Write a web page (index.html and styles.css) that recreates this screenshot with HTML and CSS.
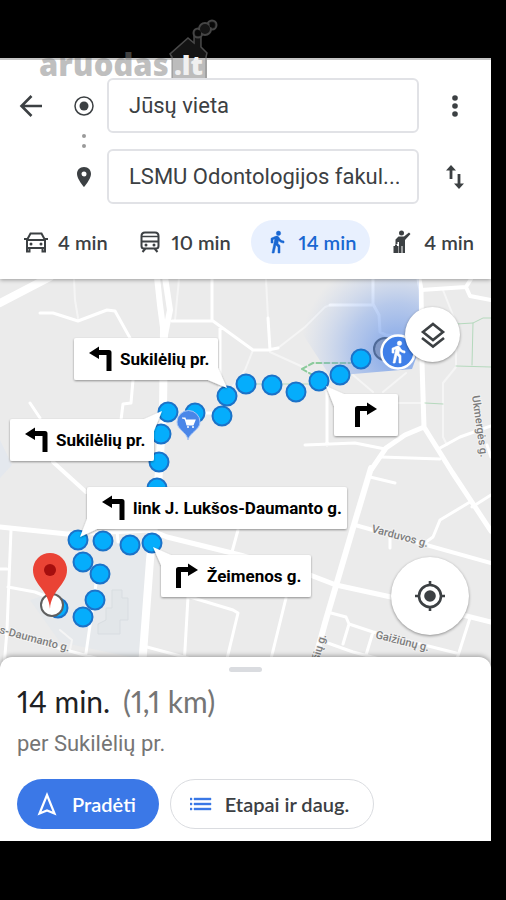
FILE: index.html
```html
<!DOCTYPE html>
<html lang="lt">
<head>
<meta charset="utf-8">
<meta name="viewport" content="width=device-width, initial-scale=1">
<title>Maršrutas</title>
<link rel="stylesheet" href="styles.css">
</head>
<body>
<main class="app">
  <form class="header">
    <div class="search">
      <button class="plain" type="button" aria-label="Atgal">
        <svg width="24" height="24" viewBox="0 0 24 24"><path d="M24 12H4M13.500 2 3.500 12l10 10" fill="none" stroke="#3c4043" stroke-width="2.600"/></svg>
      </button>
      <label class="marker" for="from" aria-label="Pradžia">
        <svg width="20" height="20" viewBox="0 0 20 20"><circle cx="10" cy="10" r="9" fill="none" stroke="#3c4043" stroke-width="1.500"/><circle cx="10" cy="10" r="4.500" fill="#3c4043"/></svg>
      </label>
      <input class="field" id="from" type="text" value="Jūsų vieta">
      <button class="plain" type="button" aria-label="Daugiau">
        <svg width="8" height="24" viewBox="0 0 8 24" fill="#3c4043"><circle cx="4" cy="4" r="2.800"/><circle cx="4" cy="12" r="2.800"/><circle cx="4" cy="20" r="2.800"/></svg>
      </button>
      <svg class="link-dots" width="6" height="16" viewBox="0 0 6 16" fill="#9a9a9a"><circle cx="3" cy="3" r="2"/><circle cx="3" cy="13" r="2"/></svg>
      <label class="marker marker-end" for="to" aria-label="Tikslas">
        <svg width="16" height="20" viewBox="0 0 16 20"><path fill-rule="evenodd" d="M8 0C3.600 0 1 3.200 1 7c0 5 7 13 7 13s7-8 7-13c0-3.800-2.600-7-7-7zm0 4.500a2.500 2.500 0 1 1 0 5 2.500 2.500 0 0 1 0-5z" fill="#3c4043"/></svg>
      </label>
      <input class="field field-end" id="to" type="text" value="LSMU Odontologijos fakul...">
      <button class="plain swap" type="button" aria-label="Sukeisti">
        <svg width="20" height="26" viewBox="0 0 20 26"><path d="M6 15V4M14 10v12" stroke="#3c4043" stroke-width="2.800" fill="none"/><path d="M1 6.500 6 1l5 5.500zM9 19.500h10L14 25z" fill="#3c4043"/></svg>
      </button>
    </div>
    <nav class="modes">
      <a class="mode" href="#car">
        <svg width="24" height="24" viewBox="0 0 24 24" fill="none" stroke="#3c4043" stroke-width="2"><path d="M3 10 6.500 3.500h11L21 10v11.500h-2.500V18h-13v3.500H3zM3 10h18M3 18h18M0 9h3M21 9h3"/><g fill="#3c4043" stroke="none"><circle cx="7" cy="14" r="1.500"/><circle cx="17" cy="14" r="1.500"/></g></svg>
        <span>4 min</span>
      </a>
      <a class="mode" href="#transit">
        <svg width="24" height="24" viewBox="0 0 24 24" fill="none" stroke="#3c4043" stroke-width="2"><path d="M7 2.500h10q3.500 0 3.500 3.500V16q0 2.500-2.500 2.500H6Q3.500 18.500 3.500 16V6Q3.500 2.500 7 2.500zM3.500 11.500h17M7.500 18.500 4.500 22M16.500 18.500l3 3.500"/><path d="M4 6.500h16" stroke-width="1.500"/><g fill="#3c4043" stroke="none"><circle cx="8" cy="15" r="1.500"/><circle cx="16" cy="15" r="1.500"/></g></svg>
        <span>10 min</span>
      </a>
      <a class="mode mode-active" href="#walk" aria-current="true">
        <svg width="24" height="24" viewBox="0 0 24 24"><path d="M13.500 5.500a2.200 2.200 0 1 0 0-4.400 2.200 2.200 0 0 0 0 4.400zM9.800 8.900 7 23h2.100l1.800-8 2.100 2v6h2v-7.500l-2.100-2 .6-3C14.800 12 16.800 13 19 13v-2c-1.900 0-3.500-1-4.300-2.400l-1-1.600c-.4-.6-1-1-1.700-1-.3 0-.5.100-.8.100L6 8.300V13h2V9.600l1.800-.7" fill="#1967d2" stroke="#1967d2" stroke-width=".5"/></svg>
        <span>14 min</span>
      </a>
      <a class="mode" href="#taxi">
        <svg width="24" height="24" viewBox="0 0 24 24" fill="#3c4043"><circle cx="11.500" cy="3" r="2.500"/><path d="M8.500 6.500h5.500L19 2.500l1.500 1.500L15 10v13h-2.500v-7h-1v7H9V12H7.500V14H5.500V9.500z"/><path d="M3.500 16H5v-1.500h2V16h1.500v7h-5z"/></svg>
        <span>4 min</span>
      </a>
    </nav>
  </form>

  <section class="map" aria-label="Žemėlapis">
    <svg class="map-canvas" viewBox="0 279 491 388" preserveAspectRatio="xMidYMid slice">
      <defs>
        <radialGradient id="beam" gradientUnits="userSpaceOnUse" cx="398" cy="352" r="98">
          <stop offset="0" stop-color="#4d83e6" stop-opacity=".7"/>
          <stop offset=".5" stop-color="#6f9aea" stop-opacity=".42"/>
          <stop offset="1" stop-color="#9db9ee" stop-opacity="0"/>
        </radialGradient>
        <filter id="lift" x="-10%" y="-20%" width="120%" height="150%"><feDropShadow dx="0" dy="1" stdDeviation="1" flood-color="#000" flood-opacity=".4"/></filter>
        <path id="left" d="M15 15 25 8.500V12h10q2.500 0 2.500 2.500V33h-5V17H25v4z"/>
        <path id="right" d="M15 33V14.500q0-2.500 2.500-2.500H27V8.500L37 15 27 21v-4h-7v16z"/>
      </defs>
      <rect y="279" width="491" height="388" fill="#ebebeb"/>
      <path d="M84 538 148 546 144 660 60 642 30 600 60 590z" fill="#e6e9ec"/>
      <path d="M0 440 12 465 0 478z" fill="#e4e8ee"/>
      <path d="M112 590h10v8h6v22h-8v14h-22v-10l8-4v-12h6z" fill="#e2e6e9" stroke="#d8dde1"/>

      <g class="roads">
        <path class="w2" d="M74 279 75 300 78 318M179 279 175 320M266 279 268 318M278 348 305 327 325 307 331 305M270 352 303 367 320 380M443 290 456 323V367L443 383V437L447 445M353 375 373 392M406 373 383 392M353 403H425M253 350 245 370 230 390M60 630 72 640 70 650"/>
        <path class="w3" d="M40 313 53 313 78 321 107 310 115 311 130 338 133 380 131 403 123 404 121 420M212 279V320M172 321H213L253 350H268L278 348M220 328V400M268 318 270 350M330 305H372M373 279V304L379 315 380 332 386 335 396 336M305 445 355 443 385 449M327 380V445M381 457 440 459M440 448 460 437 491 426M30 403 40 418M11 530 7 630 4 667M0 569H7M8 587 35 592 60 602M117 530 118 542M98 570 84 667M238 530 232 552M188 597 184 667M190 597 233 610 238 613 225 667M147 647 195 660M370 477 395 483M390 536V548M491 495 472 507M470 502 440 520 433 537 426 542M286 598 269 667M331 613 346 617 349 624 343 644M349 624 373 632 456 653M325 642 353 652 391 662M373 632 366 655M470 618 455 665M487 445 491 457M0 632 66 650 110 662M222 413H195"/>
        <path class="w4" d="M53 462 86 492M421 290 466 287 471 279M466 287 470 296 491 300M355 525 491 563"/>
        <path class="w5" d="M0 527 67 534 150 530 167 537 240 555 310 575 336 585 391 597 491 622M419 279 421 290 422 363 424 427 452 472 491 531M424 427 405 435 386 448 371 470"/>
        <path class="w6" d="M371 468 353 528 325 623 313 667"/>
        <path class="w8" d="M0 303 50 277M164 330 163 410 157 500 150 560 142 667"/>
        <path class="w6" d="M157 277 160 305 164 335M165 277 170 310 165 335"/>
      </g>
      <g class="trails">
        <path d="M456 324 473 323 483 318H491M473 323 472 365M456 366 491 367M425 403 443 404M250 384H320"/>
        <path class="dashed" d="M302 369 313 363H350M302 369 318 378"/>
      </g>

      <g class="street">
        <text transform="translate(-1 633) rotate(15)">s-Daumanto g.</text>
        <text transform="translate(371 532) rotate(15)">Varduvos g.</text>
        <text transform="translate(375 638) rotate(14)">Gaižiūnų g.</text>
        <text transform="translate(472 396) rotate(82)">Ukmergės g.</text>
        <text transform="translate(319 661) rotate(-74)">šių g.</text>
      </g>

      <path d="M330 376 412 369 419 350V279H300V330z" fill="url(#beam)"/>
      <circle cx="385" cy="349" r="11" fill="#8199c7" stroke="#4f6a98" stroke-width="2"/>

      <g class="steps">
        <circle cx="361" cy="359" r="9.500"/><circle cx="340" cy="375" r="9.500"/><circle cx="319" cy="381" r="9.500"/><circle cx="296" cy="392" r="9.500"/><circle cx="272" cy="385" r="9.500"/><circle cx="246" cy="384" r="9.500"/><circle cx="222" cy="416" r="9.500"/><circle cx="227" cy="396" r="9.500"/><circle cx="195" cy="413" r="9.500"/><circle cx="168" cy="412" r="9.500"/><circle cx="161" cy="434" r="9.500"/><circle cx="159" cy="462" r="9.500"/><circle cx="157" cy="488" r="9.500"/><circle cx="78" cy="540" r="9.500"/><circle cx="103" cy="541" r="9.500"/><circle cx="130" cy="545" r="9.500"/><circle cx="152" cy="543" r="9.500"/><circle cx="83" cy="562" r="9.500"/><circle cx="100" cy="574" r="9.500"/><circle cx="95" cy="600" r="9.500"/><circle cx="83" cy="617" r="9.500"/><circle cx="58" cy="608" r="9.500"/>
      </g>

      <g>
        <path d="M188 440C187 432 177 430 177 422a11.500 11.500 0 0 1 23 0c0 8-10 10-12 18z" fill="#4a86e8" stroke="#a9c6f5"/>
        <path d="M182 418h3l2 7h6l2-5h-9" fill="#fff" stroke="#fff" stroke-width="1.200"/><circle cx="188" cy="427" r="1" fill="#fff"/><circle cx="193" cy="427" r="1" fill="#fff"/>
      </g>
      <g>
        <circle cx="398" cy="352" r="16.500" fill="#3f7fe8" stroke="#fff" stroke-width="2.500"/>
        <path transform="translate(386 340)" d="M13.500 5.500a2.200 2.200 0 1 0 0-4.400 2.200 2.200 0 0 0 0 4.400zM9.800 8.900 7 23h2.100l1.800-8 2.100 2v6h2v-7.500l-2.100-2 .6-3C14.800 12 16.800 13 19 13v-2c-1.900 0-3.500-1-4.300-2.400l-1-1.600c-.4-.6-1-1-1.700-1-.3 0-.5.100-.8.100L6 8.300V13h2V9.600l1.800-.7" fill="#fff" stroke="#fff" stroke-width=".6"/>
      </g>
      <circle cx="52" cy="605" r="11" fill="#fff" stroke="#606060" stroke-width="2"/>
      <path d="M50 609C49 590 33 585 33 570a17 17 0 0 1 34 0c0 15-16 20-17 39z" fill="#ea4335"/>
      <circle cx="50" cy="570" r="6" fill="#a50e0e"/>

      <g class="callout" transform="translate(74 338)">
        <path class="card" d="M2 0H142Q144 0 144 2V30L153 50 134 42H2Q0 42 0 40V2Q0 0 2 0z"/><use href="#left"/><text x="46" y="27">Sukilėlių pr.</text>
      </g>
      <g class="callout" transform="translate(10 419)">
        <path class="card" d="M2 0H134L152-8 144 12V40Q144 42 142 42H2Q0 42 0 40V2Q0 0 2 0z"/><use href="#left"/><text x="46" y="27">Sukilėlių pr.</text>
      </g>
      <g class="callout" transform="translate(87 487)">
        <path class="card" d="M2 0H258Q260 0 260 2V40Q260 42 258 42H10L-7 50 0 32V2Q0 0 2 0z"/><use href="#left"/><text x="46" y="27">link J. Lukšos-Daumanto g.</text>
      </g>
      <g class="callout" transform="translate(161 555)">
        <path class="card" d="M10 0H148Q150 0 150 2V40Q150 42 148 42H2Q0 42 0 40V10L-8-8z"/><use href="#right"/><text x="46" y="27">Žeimenos g.</text>
      </g>
      <g class="callout" transform="translate(334 394)">
        <path class="card" d="M10 0H62Q64 0 64 2V40Q64 42 62 42H2Q0 42 0 40V12L-8-8z"/><use href="#right" x="6"/>
      </g>
    </svg>
    <button class="fab fab-layers" type="button" aria-label="Sluoksniai">
      <svg width="26" height="28" viewBox="0 0 26 28" fill="none" stroke="#3c4043" stroke-width="2.600"><path d="M13 3 23 11 13 19 3 11zM2 17l11 8.500L24 17"/></svg>
    </button>
    <button class="fab fab-locate" type="button" aria-label="Mano vieta">
      <svg width="32" height="32" viewBox="0 0 32 32"><g fill="none" stroke="#3c4043" stroke-width="2.600"><circle cx="16" cy="16" r="11"/><path d="M16 1v5M16 26v5M1 16h5M26 16h5"/></g><circle cx="16" cy="16" r="5.800" fill="#3c4043"/></svg>
    </button>
  </section>

  <section class="sheet">
    <div class="handle"></div>
    <h1 class="summary">14 min. <span class="distance">(1,1 km)</span></h1>
    <p class="via">per Sukilėlių pr.</p>
    <div class="actions">
      <button class="action action-start" type="button">
        <svg width="24" height="24" viewBox="0 0 24 24" fill="none" stroke="#fff" stroke-width="2.200"><path d="M12 3 19.500 21.500 12 18.500 4.500 21.500z"/></svg>
        <span>Pradėti</span>
      </button>
      <button class="action action-steps" type="button">
        <svg width="22" height="14" viewBox="0 0 22 14" fill="#3b78e7"><path d="M0 1h2v2H0zM0 6h2v2H0zM0 11h2v2H0zM4 1h17v2H4zM4 6h17v2H4zM4 11h17v2H4z" stroke="#3b78e7" stroke-width=".4"/></svg>
        <span>Etapai ir daug.</span>
      </button>
    </div>
  </section>
</main>
<svg class="watermark" width="190" height="76" viewBox="0 0 190 76" aria-hidden="true">
  <text class="brand" x="9" y="57">aruodas</text>
  <path d="M142 39h35v20h-35z" fill="#bcbcbc"/>
  <path d="M140 39v-4L158 19l6 5v-8h7v12l6 6v5z" fill="#141414"/>
  <path d="M142 59V38l-2-3L158 19l6 5v-8h7v12l6 6-1 4v21" fill="none" stroke="#808080" stroke-opacity=".55" stroke-width="1.500"/>
  <g fill="#151515" stroke="#454545" stroke-width="2"><circle cx="168" cy="14" r="4.500"/><circle cx="182" cy="6" r="4.500"/><circle cx="175" cy="10" r="6"/></g>
  <g fill="#080808"><circle cx="168" cy="14" r="3"/><circle cx="182" cy="6" r="2.500"/></g>
  <text class="tld" x="144" y="56">.lt</text>
</svg>
</body>
</html>
```
FILE: styles.css
```css
* { box-sizing: border-box; }

body {
  display: flex;
  flex-direction: column;
  min-height: 100vh;
  margin: 0;
  padding: 58px 15px 59px 0;
  background: #000;
  color: #3c4043;
  font-family: Roboto, "Liberation Sans", sans-serif;
}

button, input { font: inherit; color: inherit; }

.app {
  display: flex;
  flex: 1;
  flex-direction: column;
  background: #fff;
}

.header {
  position: relative;
  z-index: 1;
  padding: 18px 0 15px;
  border-top: 2px solid #c6c6c6;
  background: #fff;
  box-shadow: 0 1px 4px rgba(0, 0, 0, .35);
}

.search {
  display: grid;
  grid-template-columns: 60px 47px 1fr 72px;
  grid-template-rows: 55px 16px 55px;
  align-items: center;
  justify-items: center;
}

.plain {
  display: flex;
  padding: 8px;
  border: 0;
  background: none;
}

.marker { display: flex; }
.link-dots { grid-area: 2 / 2; }
.marker-end { grid-area: 3 / 2; }
.field-end { grid-area: 3 / 3; }
.swap { grid-area: 3 / 4; }

.field {
  width: 100%;
  height: 100%;
  padding: 0 18px 0 20px;
  border: 2px solid #e1e2e6;
  border-radius: 6px;
  background: #fff;
  font-size: 22px;
}

.modes {
  display: flex;
  justify-content: space-between;
  padding: 16px 7px 0 14px;
}

.mode {
  display: flex;
  align-items: center;
  gap: 10px;
  height: 44px;
  padding: 0 10px;
  border-radius: 22px;
  color: #3c4043;
  font: 600 20px Lato, sans-serif;
  font-variant-numeric: proportional-nums;
  text-decoration: none;
}

.mode-active {
  padding: 0 14px;
  background: #e8f0fe;
  color: #1967d2;
}

.map {
  position: relative;
  flex: 1;
  min-height: 240px;
}

.map-canvas {
  position: absolute;
  width: 100%;
  height: 100%;
}

.roads path, .trails path {
  fill: none;
  stroke: #fff;
  stroke-linejoin: round;
  stroke-linecap: round;
}
.roads .w2 { stroke: #f5f5f5; stroke-width: 2px; }
.roads .w3 { stroke-width: 3px; }
.roads .w4 { stroke-width: 4px; }
.roads .w5 { stroke-width: 5px; }
.roads .w6 { stroke-width: 6px; }
.roads .w8 { stroke-width: 8px; }
.trails path { stroke: #b5d9bd; stroke-width: 1px; }
.trails .dashed { stroke: #8ccb9c; stroke-width: 2px; stroke-dasharray: 5 3; }

.street text {
  fill: #7c7c7c;
  stroke: #f2f2f2;
  stroke-width: 2px;
  paint-order: stroke;
  font-size: 11px;
  font-weight: 500;
}

.steps circle { fill: #05adfc; stroke: #1c72c8; stroke-width: 2px; }

.card { fill: #fff; filter: url(#lift); }
.callout text { font-size: 17px; font-weight: 700; fill: #000; }

.fab {
  position: absolute;
  display: flex;
  align-items: center;
  justify-content: center;
  padding: 0;
  border: 0;
  border-radius: 50%;
  background: #fff;
  box-shadow: 0 1px 3px rgba(0, 0, 0, .4);
}
.fab-layers { top: 28px; right: 31px; width: 55px; height: 55px; }
.fab-locate { right: 22px; bottom: 32px; width: 78px; height: 78px; }

.sheet {
  position: relative;
  margin-top: -10px;
  padding: 10px 17px 12px;
  border-radius: 12px 12px 0 0;
  background: #fff;
  box-shadow: 0 -1px 5px rgba(0, 0, 0, .35);
}

.handle {
  width: 33px;
  height: 5px;
  margin: 0 auto;
  border-radius: 3px;
  background: #dadce0;
}

.summary {
  margin: 12px 0 0;
  color: #202124;
  font: 400 30px/34px Lato, sans-serif;
  font-variant-numeric: proportional-nums;
}
.distance { margin-left: 5px; color: #757575; }

.via {
  margin: 12px 0 22px;
  color: #757575;
  font-size: 22px;
  line-height: 27px;
}

.actions { display: flex; gap: 11px; }

.action {
  display: flex;
  align-items: center;
  height: 50px;
  border-radius: 25px;
  font: 600 20px Lato, sans-serif;
}
.action-start {
  gap: 13px;
  padding: 0 23px 0 18px;
  border: 0;
  background: #3b78e7;
  color: #fff;
}
.action-steps {
  gap: 13px;
  padding: 0 24px 0 19px;
  border: 1px solid #dadce0;
  background: #fff;
}

.watermark {
  position: absolute;
  top: 19px;
  left: 30px;
  z-index: 2;
  pointer-events: none;
}
.watermark text { font: 800 31px "Open Sans", sans-serif; }
.watermark .brand { fill: #808080; fill-opacity: .5; }
.watermark .tld { fill: #f0f0f0; font-size: 27px; }
```
